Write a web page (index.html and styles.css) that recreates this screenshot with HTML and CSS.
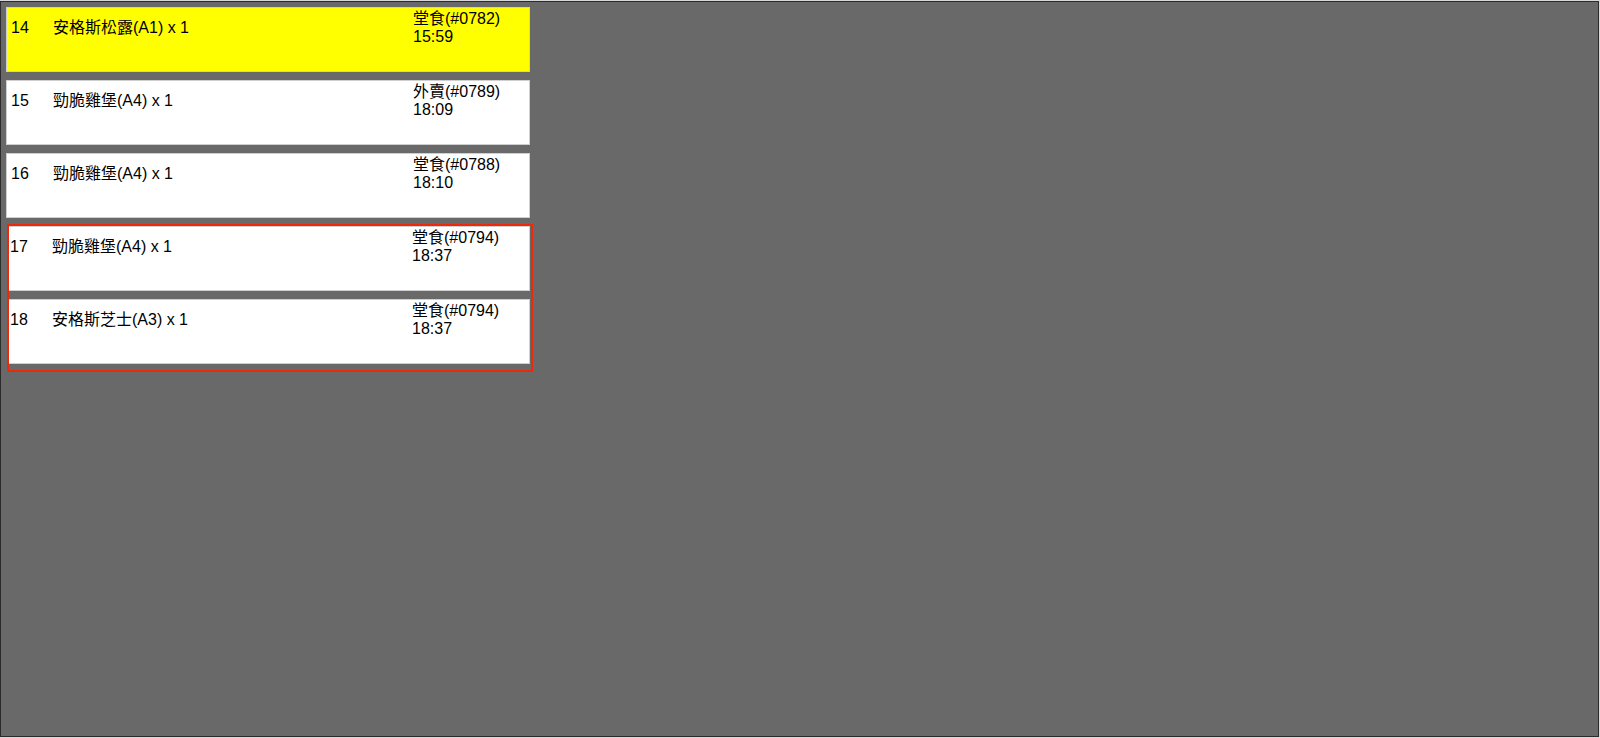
FILE: index.html
```html
<!DOCTYPE html>
<html lang="zh-Hant">

<head>
  <meta charset="utf-8">
  <meta name="viewport" content="width=device-width, initial-scale=1.0">
  <title>Kitchen Queue</title>
  <link rel="stylesheet" href="styles.css">
</head>

<body>
  <div class="screen">
    <div class="queue">
      <div class="ticket ticket-urgent">
        <span class="no">14</span>
        <span class="item">安格斯松露(A1) x 1</span>
        <span class="order"><b>堂食(#0782)</b><b>15:59</b></span>
      </div>
      <div class="ticket">
        <span class="no">15</span>
        <span class="item">勁脆雞堡(A4) x 1</span>
        <span class="order"><b>外賣(#0789)</b><b>18:09</b></span>
      </div>
      <div class="ticket">
        <span class="no">16</span>
        <span class="item">勁脆雞堡(A4) x 1</span>
        <span class="order"><b>堂食(#0788)</b><b>18:10</b></span>
      </div>
      <!-- same order, grouped -->
      <div class="ticket-group">
        <div class="ticket">
          <span class="no">17</span>
          <span class="item">勁脆雞堡(A4) x 1</span>
          <span class="order"><b>堂食(#0794)</b><b>18:37</b></span>
        </div>
        <div class="ticket">
          <span class="no">18</span>
          <span class="item">安格斯芝士(A3) x 1</span>
          <span class="order"><b>堂食(#0794)</b><b>18:37</b></span>
        </div>
      </div>
    </div>
  </div>
</body>

</html>
```

FILE: styles.css
```css
html, body {
  margin: 0;
  padding: 0;
  background: #d8d8d8;
}

.screen {
  box-sizing: border-box;
  width: 1599px;
  height: 736px;
  margin-top: 1px;
  border: 1px solid #2b2b2b;
  background: #696969;
  overflow: hidden;
  font-family: "Liberation Sans", Arial, "Noto Sans CJK TC", sans-serif;
  font-size: 16px;
  line-height: 17px;
  color: #000;
}

.queue {
  display: flex;
  flex-direction: column;
  align-items: flex-start;
  gap: 8px;
  padding: 5px 0 0 5px;
}

.ticket {
  box-sizing: border-box;
  display: grid;
  grid-template-columns: 42px 360px 1fr;
  width: 524px;
  height: 65px;
  padding-left: 4px;
  border: 1px solid #cfcfcf;
  background: #fff;
}

.ticket-urgent {
  background: #ffff00;
}

.ticket .no,
.ticket .item {
  padding-top: 11px;
}

.ticket .order {
  padding-top: 2px;
}

/* order type and time, one per line */
.ticket .order b {
  display: block;
  height: 18px;
  line-height: 18px;
  font-weight: normal;
}

/* tickets of one order share a red frame */
.ticket-group {
  display: flex;
  flex-direction: column;
  gap: 8px;
  width: 522px;
  margin-left: 3px;
  padding-bottom: 6px;
  outline: 2px solid #f0280a;
}

.ticket-group .ticket {
  width: 521px;
  padding-left: 1px;
  border-left: 0;
}
```
